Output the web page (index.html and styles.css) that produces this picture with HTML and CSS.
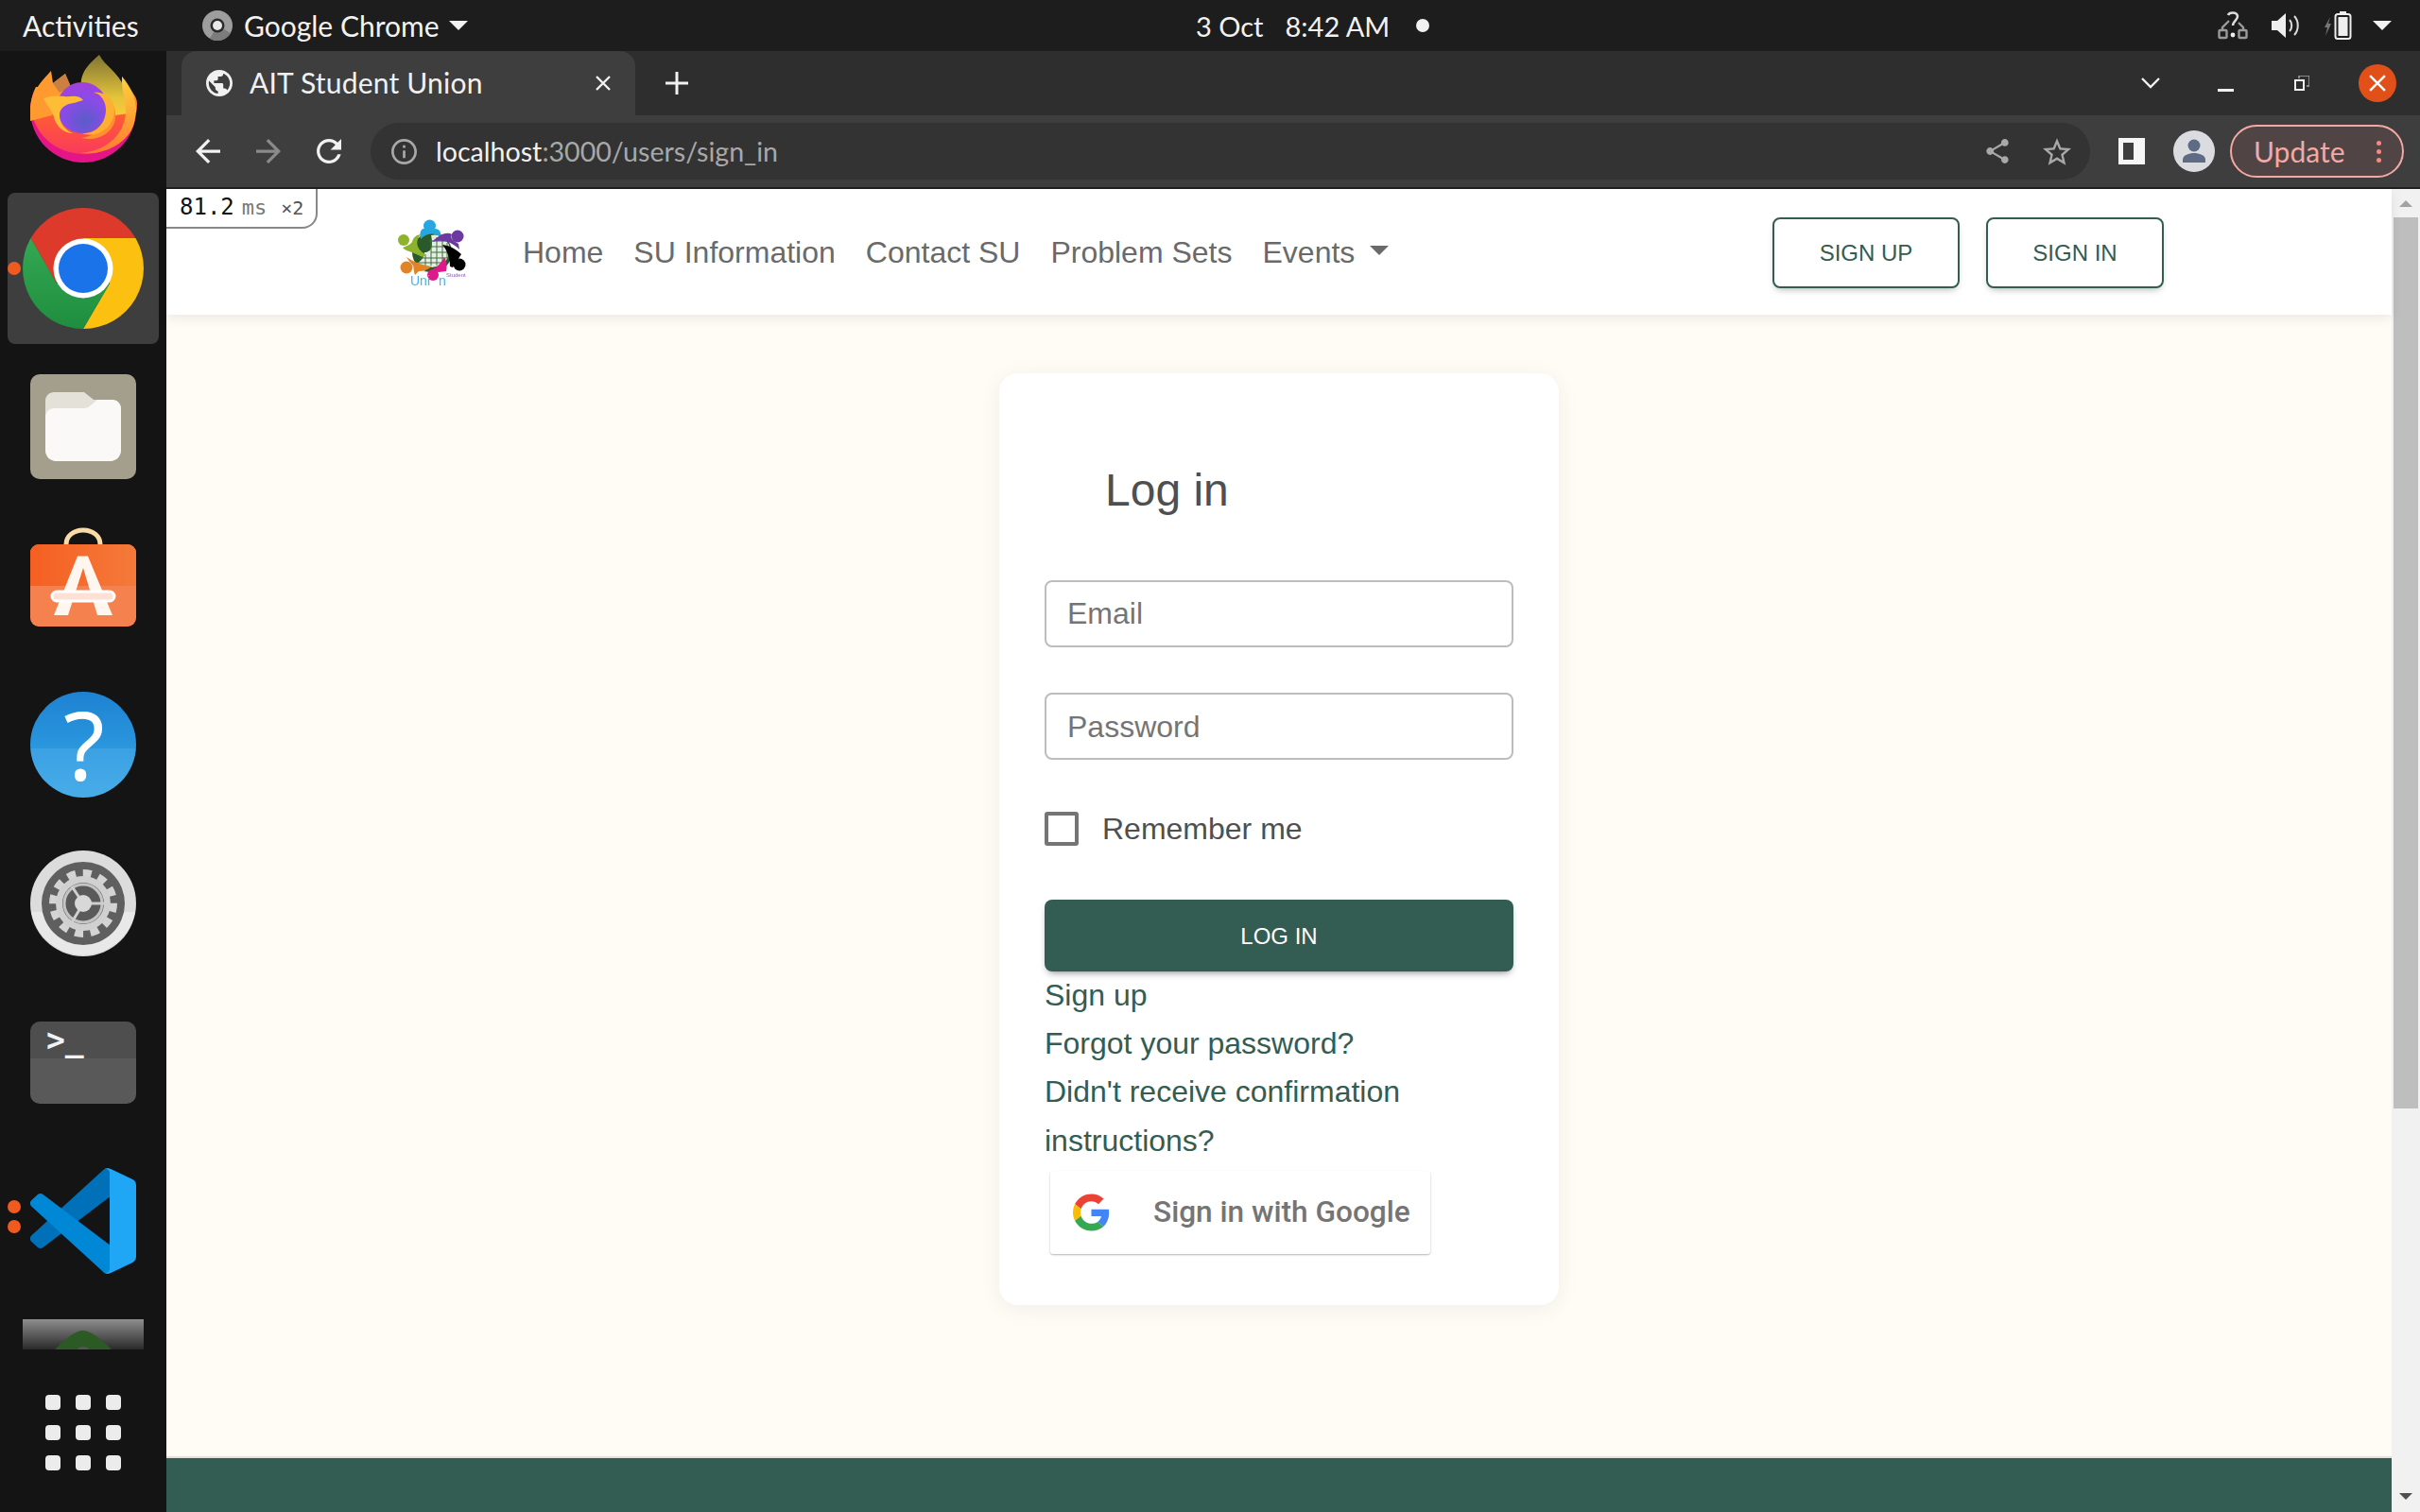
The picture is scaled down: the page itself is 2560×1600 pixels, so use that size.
FILE: index.html
```html
<!DOCTYPE html>
<html lang="en">
<head>
    <meta charset="UTF-8">
    <meta name="viewport" content="width=device-width, initial-scale=1.0">
    <title>AIT Student Union</title>
    <link rel="stylesheet" href="styles.css">
</head>
<body>

<!-- ubuntu top bar -->
<header class="topbar">
    <span class="activities">Activities</span>
    <span class="app-menu">
        <svg class="app-icon" viewBox="0 0 32 32"><circle cx="16" cy="16" r="16" fill="#9d9d9d"/><path d="M16 16L30 24A16 16 0 0 1 8 30z" fill="#7c7c7c"/><circle cx="16" cy="16" r="7.5" fill="#2a2a2a"/><circle cx="16" cy="16" r="5" fill="#e8e8e8"/></svg>
        <span class="app-name">Google Chrome</span>
        <span class="tri app-tri"></span>
    </span>
    <span class="clock"><span class="clock-date">3 Oct</span><span>8:42 AM</span></span>
    <span class="clock-dot"></span>
    <span class="tray">
        <svg class="tray-net" viewBox="0 0 32 32" fill="none" stroke="#9a9a9a" stroke-width="2.4"><rect x="1.5" y="21" width="8" height="8" rx="1"/><rect x="22.5" y="21" width="8" height="8" rx="1"/><path d="M5 21v-3l7-7M27 21v-3l-5-5"/><path d="M11 5c1-3 9-4 10 1 .7 4-5 5-5 10" stroke="#dcdcdc" stroke-width="2.6"/><circle cx="16" cy="26" r="2.4" fill="#eee" stroke="none"/></svg>
        <svg class="tray-vol" viewBox="0 0 30 26"><path d="M0 8h6l9-8v26l-9-8H0z" fill="#eee"/><path d="M19 7c3 3 3 9 0 12M24 3c5 5 5 15 0 20" fill="none" stroke="#ddd" stroke-width="2"/></svg>
        <svg class="tray-bat" viewBox="0 0 29 30"><path d="M6 6L0 17h3l-2 9 6-13H4z" fill="#777"/><rect x="11.5" y="3" width="16" height="26" rx="2.5" fill="none" stroke="#eee" stroke-width="2"/><rect x="16" y="0" width="7" height="3" fill="#eee"/><rect x="14.5" y="6" width="10" height="20" fill="#eee"/></svg>
        <span class="tri tray-tri"></span>
    </span>
</header>

<div class="desktop">
    <!-- launcher -->
    <nav class="dock">
        <div class="dock-first">
            <svg class="dock-fox" viewBox="0 0 130 125">
                <defs>
                    <linearGradient id="foxBody" x1="0" y1="0" x2="0" y2="1"><stop offset="0" stop-color="#ffa52f"/><stop offset=".45" stop-color="#ff5a37"/><stop offset="1" stop-color="#f93a5c"/></linearGradient>
                    <linearGradient id="foxTop" x1="0" y1="0" x2="0" y2="1"><stop offset="0" stop-color="#7f7434"/><stop offset=".7" stop-color="#e4c43a"/><stop offset="1" stop-color="#ffc83a"/></linearGradient>
                    <linearGradient id="foxWrap" x1="0" y1="0" x2="0" y2="1"><stop offset="0" stop-color="#ffd23d"/><stop offset="1" stop-color="#ff7a2f"/></linearGradient>
                    <radialGradient id="foxGlobe" cx=".55" cy=".75" r=".8"><stop offset="0" stop-color="#5a5cc8"/><stop offset=".55" stop-color="#8a4be8"/><stop offset="1" stop-color="#a63fd8"/></radialGradient>
                </defs>
                <path d="M14 38H112C117 46 120 54 120 62A56 56 0 0 1 8 62C8 54 10 46 14 38z" fill="#e31587"/>
                <path d="M14 38H112C118 46 121 50 121 56C121 86 96 109 65 109C34 109 9 86 9 56C9 50 11 44 14 38z" fill="url(#foxBody)"/>
                <path d="M62 38C60 22 72 12 81 4c6 12 20 18 26 34l-2-11c9 10 15 22 15 38l-30 4z" fill="url(#foxTop)"/>
                <path d="M8 62C8 44 20 32 30 21l2 13 13-10 6 14-20 30-23 6z" fill="#ff9a30"/>
                <path d="M32 34l13-10 6 14-12 6z" fill="#c98040"/>
                <path d="M105 27c10 14 16 24 14 44-3 24-30 40-58 37 26-2 46-18 48-42 1-14-5-24-4-39z" fill="url(#foxWrap)"/>
                <path d="M75 44c16-2 25 14 23 28-3 16-20 24-36 20 16-2 26-14 26-28 0-10-6-17-13-20z" fill="#ff8f30"/>
                <circle cx="63" cy="60" r="27" fill="url(#foxGlobe)"/>
                <path d="M75 44c8 1 13 10 13 18 0 14-10 26-25 25 16 6 34-6 34-25 0-10-10-20-22-18z" fill="#ffb030"/>
                <path d="M22 50c8-3 16-3 22-2 6 1 14-3 20 4-6 2-10 3-15 4-6 2-10 6-10 12 0 8 6 16 14 19-10 0-18-8-20-17-1-6-6-10-11-20z" fill="#ffbc36"/>
            </svg>
        </div>
        <div class="dock-slot dock-active">
            <span class="run-dot chrome-dot"></span>
            <svg class="dock-chrome" viewBox="0 0 128 128">
                <defs><linearGradient id="chromeGreen" x1="0" y1="0" x2="0" y2="1"><stop offset="0" stop-color="#34a853"/><stop offset="1" stop-color="#1e8e3e"/></linearGradient></defs>
                <path d="M8.6 32A64 64 0 0 1 119.4 32L64 32 36 80z" fill="#de3a2c"/>
                <path d="M119.4 32A64 64 0 0 1 64 128L92 80 64 32z" fill="#fcc010"/>
                <path d="M64 128A64 64 0 0 1 8.6 32L36 80l56 0z" fill="url(#chromeGreen)"/>
                <circle cx="64" cy="64" r="31.5" fill="#fff"/>
                <circle cx="64" cy="64" r="26" fill="#1a73e8"/>
            </svg>
        </div>
        <div class="dock-slot">
            <svg class="dock-icon" viewBox="0 0 112 112">
                <rect width="112" height="111" rx="10" fill="#a49e8c"/>
                <path d="M16 28c0-5 4-9 9-9h32l10 8h20c5 0 9 4 9 9v44c0 7-5 12-12 12H28c-7 0-12-5-12-12z" fill="#e4e1d9"/>
                <path d="M16 46c0-6 4-10 10-10h30c4 0 6-1 9-4l6-5h15c6 0 10 4 10 10v43c0 7-5 12-12 12H28c-7 0-12-5-12-12z" fill="#faf9f7"/>
            </svg>
        </div>
        <div class="dock-slot">
            <svg class="dock-icon" viewBox="0 0 112 112">
                <defs><linearGradient id="bagTop" x1="0" y1="0" x2="1" y2="0"><stop offset="0" stop-color="#f55f22"/><stop offset="1" stop-color="#f47a3a"/></linearGradient></defs>
                <path d="M38 14v-2c0-9 8-15 18-15s18 6 18 15v2" fill="none" stroke="#fadba6" stroke-width="5" stroke-linecap="round"/>
                <rect y="12" width="112" height="87" rx="9" fill="#f4814e"/>
                <path d="M9 12h94a9 9 0 0 1 9 9v35H0V21a9 9 0 0 1 9-9z" fill="url(#bagTop)"/>
                <path d="M25 87L50 24.5h11L87 87H71L56 37 40 87z" fill="#fff6f0"/>
                <rect x="23" y="62" width="66" height="10" rx="5" fill="#ffe0d4" stroke="#fff" stroke-width="3"/>
            </svg>
        </div>
        <div class="dock-slot">
            <svg class="dock-icon" viewBox="0 0 112 112">
                <defs><linearGradient id="helpBlue" x1="0" y1="0" x2="0" y2="1"><stop offset="0" stop-color="#1e82d2"/><stop offset=".54" stop-color="#2a97de"/><stop offset=".54" stop-color="#3ba1e3"/><stop offset="1" stop-color="#48ace8"/></linearGradient></defs>
                <circle cx="56" cy="56" r="56" fill="url(#helpBlue)"/>
                <text class="help-mark" x="57" y="94">?</text>
            </svg>
        </div>
        <div class="dock-slot">
            <svg class="dock-icon" viewBox="0 0 112 112">
                <circle cx="56" cy="56" r="56" fill="#dcdcdc"/>
                <path d="M1 65h110a56 56 0 0 1-110 0z" fill="#e8e8e8"/>
                <circle cx="56" cy="56" r="44" fill="#5f5f5f"/>
                <circle cx="56" cy="56" r="32" fill="none" stroke="#d4d4d4" stroke-width="8" stroke-dasharray="9 7.7"/>
                <circle cx="56" cy="56" r="29" fill="#d0d0d0"/>
                <circle cx="56" cy="56" r="22" fill="#5a5a5a"/>
                <circle cx="56" cy="56" r="20" fill="none" stroke="#c4c4c4" stroke-width="3"/>
                <path d="M56 56L44 38M56 56H80M56 56L44 76" stroke="#cfcfcf" stroke-width="3"/>
                <circle cx="56" cy="56" r="9" fill="#d8d8d8"/>
            </svg>
        </div>
        <div class="dock-slot">
            <div class="terminal-icon"><span class="terminal-prompt">&gt;_</span></div>
        </div>
        <div class="dock-slot">
            <span class="run-dot code-dot-a"></span>
            <span class="run-dot code-dot-b"></span>
            <svg class="dock-icon" viewBox="0 0 100 100">
                <path d="M96.4614 10.7962L75.8569 0.875542C73.4719 -0.272773 70.6217 0.211611 68.75 2.08333L1.29858 63.5832C-0.515693 65.2373 -0.513607 68.0937 1.30308 69.7452L6.81272 74.754C8.29793 76.1042 10.5347 76.2036 12.1338 74.9905L93.3609 13.3699C96.086 11.3026 100 13.2462 100 16.6667V16.4275C100 14.0265 98.6246 11.8378 96.4614 10.7962Z" fill="#0070b8"/>
                <path d="M96.4614 89.2038L75.8569 99.1245C73.4719 100.273 70.6217 99.7884 68.75 97.9167L1.29858 36.4169C-0.515693 34.7627 -0.513607 31.9063 1.30308 30.2548L6.81272 25.246C8.29793 23.8958 10.5347 23.7964 12.1338 25.0095L93.3609 86.6301C96.086 88.6974 100 86.7538 100 83.3333V83.5725C100 85.9735 98.6246 88.1622 96.4614 89.2038Z" fill="#0087d6"/>
                <path d="M75.8578 99.1263C73.4721 100.274 70.6219 99.7885 68.75 97.9166C71.0564 100.223 75 98.5895 75 95.3278V4.67213C75 1.41039 71.0564 -0.223106 68.75 2.08329C70.6219 0.211402 73.4721 -0.273666 75.8578 0.873633L96.4587 10.7807C98.6234 11.8217 100 14.0112 100 16.4132V83.5871C100 85.9891 98.6234 88.1786 96.4586 89.2196L75.8578 99.1263Z" fill="#1fa6f5"/>
            </svg>
        </div>
        <div class="dock-strip">
            <svg class="strip-arc" viewBox="0 0 128 32"><path d="M34 32C46 20 56 12 64 12s20 10 30 20z" fill="#2c5a24"/><path d="M58 32c2-4 10-4 12 0z" fill="#555"/></svg>
        </div>
        <div class="app-grid">
            <span></span><span></span><span></span>
            <span></span><span></span><span></span>
            <span></span><span></span><span></span>
        </div>
    </nav>

    <div class="browser">
        <div class="tabstrip">
            <div class="tab">
                <svg class="tab-globe" viewBox="2 2 20 20"><path fill="#f1f1f1" d="M12 2C6.48 2 2 6.48 2 12s4.48 10 10 10 10-4.48 10-10S17.52 2 12 2zm-1 17.93c-3.95-.49-7-3.85-7-7.93 0-.62.08-1.21.21-1.79L9 15v1c0 1.1.9 2 2 2v1.93zm6.9-2.54c-.26-.81-1-1.39-1.9-1.39h-1v-3c0-.55-.45-1-1-1H8v-2h2c.55 0 1-.45 1-1V7h2c1.1 0 2-.9 2-2v-.41c2.93 1.19 5 4.06 5 7.41 0 2.08-.8 3.97-2.1 5.39z"/></svg>
                <span class="tab-title">AIT Student Union</span>
                <svg class="tab-close" viewBox="0 0 16 16"><path d="M1 1l14 14M15 1L1 15" stroke="#f1f1f1" stroke-width="2.4"/></svg>
            </div>
            <svg class="new-tab" viewBox="0 0 24 24"><path d="M12 0v24M0 12h24" stroke="#f1f1f1" stroke-width="3"/></svg>
            <svg class="tab-search" viewBox="0 0 20 12"><path d="M1 1l9 9 9-9" fill="none" stroke="#f1f1f1" stroke-width="2.4"/></svg>
            <span class="win-min"></span>
            <svg class="win-restore" viewBox="0 0 16 16"><path d="M5 3V0h11v11h-3" fill="none" stroke="#a8a8a8" stroke-width="1.4"/><rect x="1" y="5" width="9" height="10" fill="none" stroke="#f1f1f1" stroke-width="2"/></svg>
            <span class="win-close"><svg viewBox="0 0 16 16"><path d="M1 1l14 14M15 1L1 15" stroke="#fff" stroke-width="2.2"/></svg></span>
        </div>

        <div class="toolbar">
            <svg class="tool-icon back-icon" viewBox="4 4 16 16"><path fill="#f1f1f1" d="M20 11H7.83l5.59-5.59L12 4l-8 8 8 8 1.41-1.41L7.83 13H20v-2z"/></svg>
            <svg class="tool-icon forward-icon" viewBox="4 4 16 16"><path fill="#8a8a8a" d="M4 11h12.17l-5.59-5.59L12 4l8 8-8 8-1.41-1.41L16.17 13H4v-2z"/></svg>
            <svg class="tool-icon reload-icon" viewBox="4 4 16 16"><path fill="#f1f1f1" d="M17.65 6.35C16.2 4.9 14.21 4 12 4c-4.42 0-7.99 3.58-7.99 8s3.57 8 7.99 8c3.73 0 6.84-2.55 7.73-6h-2.08c-.82 2.33-3.04 4-5.65 4-3.31 0-6-2.69-6-6s2.69-6 6-6c1.66 0 3.14.69 4.22 1.78L13 11h7V4l-2.35 2.35z"/></svg>
            <div class="omnibox">
                <svg class="info-icon" viewBox="2 2 20 20"><path fill="#a8a8a8" d="M11 7h2v2h-2zm0 4h2v6h-2zm1-9C6.48 2 2 6.48 2 12s4.48 10 10 10 10-4.48 10-10S17.52 2 12 2zm0 18c-4.41 0-8-3.59-8-8s3.59-8 8-8 8 3.59 8 8-3.59 8-8 8z"/></svg>
                <span class="url"><span class="url-host">localhost</span>:3000/users/sign_in</span>
                <svg class="share-icon" viewBox="3 2 18 20"><path fill="#a8a8a8" d="M18 16.08c-.76 0-1.44.3-1.96.77L8.91 12.7c.05-.23.09-.46.09-.7s-.04-.47-.09-.7l7.05-4.11c.54.5 1.25.81 2.04.81 1.66 0 3-1.34 3-3s-1.34-3-3-3-3 1.34-3 3c0 .24.04.47.09.7L8.04 9.81C7.5 9.31 6.79 9 6 9c-1.66 0-3 1.34-3 3s1.34 3 3 3c.79 0 1.5-.31 2.04-.81l7.12 4.16c-.05.21-.08.43-.08.65 0 1.61 1.31 2.92 2.92 2.92 1.61 0 2.92-1.31 2.92-2.92s-1.31-2.92-2.92-2.92z"/></svg>
                <svg class="star-icon" viewBox="2 2 20 19"><path fill="#a8a8a8" d="M22 9.24l-7.19-.62L12 2 9.19 8.63 2 9.24l5.46 4.73L5.82 21 12 17.27 18.18 21l-1.63-7.03L22 9.24zM12 15.4l-3.76 2.27 1-4.28-3.32-2.88 4.38-.38L12 6.1l1.71 4.04 4.38.38-3.32 2.88 1 4.28L12 15.4z"/></svg>
            </div>
            <span class="side-panel"><span></span></span>
            <svg class="avatar" viewBox="0 0 44 44"><circle cx="22" cy="22" r="22" fill="#dadce0"/><circle cx="22" cy="16" r="6.5" fill="#5f6b85"/><path d="M10 34v-3c0-5 7-7 12-7s12 2 12 7v3z" fill="#5f6b85"/></svg>
            <div class="update-btn">
                <span>Update</span>
                <span class="update-dots"><i></i><i></i><i></i></span>
            </div>
        </div>

        <div class="viewport">
            <div class="page">
                <div class="timing-badge"><b>81.2</b><span class="ms">ms</span><span class="times">×2</span></div>

                <div class="navbar">
                    <svg class="logo" viewBox="0 0 95 85">
                        <circle cx="47" cy="42" r="21" fill="#2b5a2a"/>
                        <path d="M46 24c8-2 14 2 19 10 2 10-2 18-10 22-8 3-16 2-24-2 6-4 8-8 8-12 6 0 10-4 7-18z" fill="#e4eee4"/>
                        <path d="M34 48h30M32 53h28M44 30h22M46 36h20M46 42h20M40 44v12M46 28v28M52 26v30M58 28v26M63 32v16" stroke="#3f6f3f" stroke-width="1" fill="none"/>
                        <circle cx="44.5" cy="14" r="6.5" fill="#27a7df"/>
                        <path d="M35 28c-2-7 1-12 5-11 3 3 7 3 10 0 5 0 7 4 6 9-6-5-14-5-21 2z" fill="#27a7df"/>
                        <circle cx="74" cy="25" r="6.5" fill="#6d39a0"/>
                        <path d="M47 31c8-8 16-11 21-8-2 4 0 6 7 10l1 6c-8-8-18-11-29-8z" fill="#6d39a0"/>
                        <circle cx="17" cy="29" r="6" fill="#8db32d"/>
                        <path d="M35 23c-6 1-8 4-9 8-2 3-6 4-10 6 2 3 8 4 12 6l9 4 3-3c-10-5-11-14-5-21z" fill="#8db32d"/>
                        <circle cx="20" cy="58" r="6.5" fill="#e08426"/>
                        <path d="M20 47c6 4 14 8 27 10-4 3-8 5-14 5l-4 4c-2-6-1-7-2-10-2-3-5-5-7-9z" fill="#e08426"/>
                        <circle cx="76" cy="55" r="6.5" fill="#000"/>
                        <path d="M58 34c8 1 15 5 20 10l-9 14-3-1c0-9-3-17-8-23z" fill="#000"/>
                        <circle cx="48" cy="66" r="6" fill="#e0198b"/>
                        <path d="M38 63c9-1 17-6 22-16 3 5 3 11 2 15l-8 1c-5-2-10-2-16 0z" fill="#e0198b"/>
                        <text class="logo-student" x="62" y="68">Student</text>
                        <text class="logo-union" x="24" y="77">Uni<tspan dx="9">n</tspan></text>
                    </svg>
                    <a class="nav-link" href="#">Home</a>
                    <a class="nav-link" href="#">SU Information</a>
                    <a class="nav-link" href="#">Contact SU</a>
                    <a class="nav-link" href="#">Problem Sets</a>
                    <a class="nav-link nav-drop" href="#">Events</a>
                    <div class="nav-buttons">
                        <button class="btn-outline btn-signup">SIGN UP</button>
                        <button class="btn-outline btn-signin">SIGN IN</button>
                    </div>
                </div>

                <main class="content">
                    <div class="login-card">
                        <h2 class="login-title">Log in</h2>
                        <form class="login-form">
                            <input class="field" type="email" placeholder="Email">
                            <input class="field" type="password" placeholder="Password">
                            <label class="remember"><input class="check" type="checkbox"><span>Remember me</span></label>
                            <button type="button" class="btn-login">LOG IN</button>
                        </form>
                        <div class="login-links">
                            <a href="#">Sign up</a>
                            <a href="#">Forgot your password?</a>
                            <a href="#">Didn't receive confirmation instructions?</a>
                        </div>
                        <div class="google-btn">
                            <svg class="google-g" viewBox="0 0 48 48">
                                <path fill="#EA4335" d="M24 9.5c3.54 0 6.71 1.22 9.21 3.6l6.85-6.85C35.9 2.38 30.47 0 24 0 14.62 0 6.51 5.38 2.56 13.22l7.98 6.19C12.43 13.72 17.74 9.5 24 9.5z"/>
                                <path fill="#4285F4" d="M46.98 24.55c0-1.57-.15-3.09-.38-4.55H24v9.02h12.94c-.58 2.96-2.26 5.48-4.78 7.18l7.73 6c4.51-4.18 7.09-10.36 7.09-17.65z"/>
                                <path fill="#FBBC05" d="M10.53 28.59c-.48-1.45-.76-2.99-.76-4.59s.27-3.14.76-4.59l-7.98-6.19C.92 16.46 0 20.12 0 24c0 3.88.92 7.54 2.56 10.78l7.97-6.19z"/>
                                <path fill="#34A853" d="M24 48c6.48 0 11.93-2.13 15.89-5.81l-7.73-6c-2.15 1.45-4.92 2.3-8.16 2.3-6.26 0-11.57-4.22-13.47-9.91l-7.98 6.19C6.51 42.62 14.62 48 24 48z"/>
                            </svg>
                            <span>Sign in with Google</span>
                        </div>
                    </div>
                </main>

                <footer class="footer"></footer>
            </div>

            <div class="scrollbar">
                <div class="scroll-btn"><span class="arrow-up"></span></div>
                <div class="scroll-track"><div class="scroll-thumb"></div></div>
                <div class="scroll-btn scroll-btn-down"><span class="arrow-down"></span></div>
            </div>
        </div>
    </div>
</div>

</body>
</html>
```

FILE: styles.css
```css
* {
    box-sizing: border-box;
}
html, body {
    margin: 0;
    padding: 0;
}
body {
    width: 2560px;
    height: 1600px;
    overflow: hidden;
    background: #141414;
    font-family: "Liberation Sans", Arial, sans-serif;
}
svg {
    display: block;
    flex: none;
}

/* ubuntu top bar */
.topbar {
    height: 54px;
    background: #1d1d1d;
    color: #f2f2f2;
    display: flex;
    align-items: center;
    font-family: Lato, "Noto Sans", sans-serif;
    font-size: 30px;
}
.activities {
    margin-left: 24px;
    width: 190px;
}
.app-menu {
    display: flex;
    align-items: center;
}
.app-icon {
    width: 32px;
    height: 32px;
}
.app-name {
    margin-left: 12px;
    width: 217px;
}
.tri {
    width: 0;
    height: 0;
    border-left: 10px solid transparent;
    border-right: 10px solid transparent;
    border-top: 10px solid #f2f2f2;
}
.clock {
    margin-left: 770px;
    display: flex;
    gap: 23px;
    width: 233px;
    font-size: 29px;
}
.clock-dot {
    width: 14px;
    height: 14px;
    border-radius: 50%;
    background: #f2f2f2;
}
.tray {
    margin-left: auto;
    display: flex;
    align-items: center;
    padding-right: 30px;
}
.tray-net {
    width: 32px;
    height: 32px;
}
.tray-vol {
    width: 30px;
    height: 26px;
    margin-left: 25px;
}
.tray-bat {
    width: 29px;
    height: 30px;
    margin-left: 26px;
}
.tray-tri {
    margin-left: 22px;
}

.desktop {
    display: flex;
    height: 1546px;
}

/* launcher */
.dock {
    width: 176px;
    flex: none;
    background: #141414;
    display: flex;
    flex-direction: column;
    align-items: center;
}
.dock-first {
    height: 125px;
    margin: 0 0 25px 2px;
}
.dock-fox {
    width: 130px;
    height: 125px;
}
.dock-slot {
    position: relative;
    width: 160px;
    height: 160px;
    margin-bottom: 8px;
    display: flex;
    align-items: center;
    justify-content: center;
    border-radius: 8px;
}
.dock-active {
    background: #3e3e3e;
}
.dock-chrome {
    width: 128px;
    height: 128px;
    overflow: visible;
}
.dock-icon {
    width: 112px;
    height: 112px;
    overflow: visible;
}
.help-mark {
    font-family: "Noto Sans", sans-serif;
    font-size: 100px;
    fill: #fff;
    text-anchor: middle;
}
.run-dot {
    position: absolute;
    left: 0;
    width: 14px;
    height: 14px;
    border-radius: 50%;
    background: #ef5a1f;
}
.chrome-dot {
    top: 73px;
}
.code-dot-a {
    top: 58px;
}
.code-dot-b {
    top: 79px;
}
.terminal-icon {
    width: 112px;
    height: 87px;
    border-radius: 10px;
    background: linear-gradient(#4e4e4e 45%, #595959 45%);
    padding: 2px 0 0 17px;
}
.terminal-prompt {
    font-family: "DejaVu Sans Mono", monospace;
    font-weight: bold;
    font-size: 33px;
    line-height: 36px;
    color: #f2f2f2;
}
.dock-strip {
    width: 128px;
    height: 32px;
    margin-top: 16px;
    background: linear-gradient(#8e8e8e, #2a2a2a);
}
.strip-arc {
    width: 128px;
    height: 32px;
}
.app-grid {
    margin-top: 48px;
    display: grid;
    grid-template-columns: repeat(3, 16px);
    grid-auto-rows: 16px;
    gap: 16px;
}
.app-grid span {
    background: #ececec;
    border-radius: 4px;
}

/* browser window */
.browser {
    flex: 1;
    min-width: 0;
    display: flex;
    flex-direction: column;
}
.tabstrip {
    height: 68px;
    background: #2e2e2e;
    display: flex;
    align-items: center;
    padding-left: 16px;
    font-family: Lato, "Noto Sans", sans-serif;
}
.tab {
    width: 480px;
    height: 68px;
    background: #3e3e3e;
    border-radius: 16px 16px 0 0;
    display: flex;
    align-items: center;
    padding-left: 26px;
    color: #f1f1f1;
    font-size: 30px;
}
.tab-globe {
    width: 28px;
    height: 28px;
}
.tab-title {
    margin-left: 18px;
    width: 366px;
    padding-bottom: 2px;
    letter-spacing: 0.2px;
}
.tab-close {
    width: 16px;
    height: 16px;
}
.new-tab {
    width: 24px;
    height: 24px;
    margin-left: 32px;
}
.tab-search {
    width: 20px;
    height: 12px;
    margin-left: 1537px;
}
.win-min {
    width: 17px;
    height: 3px;
    margin-left: 61px;
    margin-top: 14px;
    background: #f1f1f1;
}
.win-restore {
    width: 16px;
    height: 16px;
    margin-left: 64px;
}
.win-close {
    width: 40px;
    height: 40px;
    margin-left: 52px;
    border-radius: 50%;
    background: #e2501a;
    display: flex;
    align-items: center;
    justify-content: center;
}
.win-close svg {
    width: 18px;
    height: 18px;
}

.toolbar {
    height: 78px;
    background: #3e3e3e;
    border-bottom: 2px solid #1f1f1f;
    display: flex;
    align-items: center;
    padding-left: 31px;
    font-family: Lato, "Noto Sans", sans-serif;
}
.tool-icon {
    width: 26px;
    height: 26px;
}
.forward-icon {
    margin-left: 38px;
}
.reload-icon {
    margin-left: 38px;
}
.omnibox {
    width: 1819px;
    height: 60px;
    margin-left: 31px;
    border-radius: 30px;
    background: #333333;
    display: flex;
    align-items: center;
    padding-left: 22px;
}
.info-icon {
    width: 27px;
    height: 27px;
}
.url {
    margin-left: 20px;
    width: 1640px;
    font-size: 28.6px;
    color: #a8a8a8;
}
.url-host {
    color: #f1f1f1;
}
.share-icon {
    width: 24px;
    height: 26px;
}
.star-icon {
    width: 30px;
    height: 29px;
    margin-left: 36px;
}
.side-panel {
    width: 28px;
    height: 28px;
    margin-left: 30px;
    background: #f6f6f6;
    padding: 5px 12px 5px 5px;
}
.side-panel span {
    display: block;
    height: 100%;
    background: #3e3e3e;
}
.avatar {
    width: 44px;
    height: 44px;
    margin-left: 30px;
}
.update-btn {
    width: 184px;
    height: 56px;
    margin-left: 16px;
    border: 2px solid #f4a9a4;
    border-radius: 28px;
    background: #514444;
    color: #f4a9a4;
    font-size: 30px;
    display: flex;
    align-items: center;
    padding-left: 23px;
}
.update-dots {
    margin-left: auto;
    margin-right: 22px;
    display: flex;
    flex-direction: column;
    gap: 4px;
}
.update-dots i {
    display: block;
    width: 5px;
    height: 5px;
    border-radius: 50%;
    background: #f28b82;
}

/* the page */
.viewport {
    flex: 1;
    display: flex;
    min-height: 0;
}
.page {
    position: relative;
    flex: 1;
    min-width: 0;
    background: #fffcf5;
    display: flex;
    flex-direction: column;
}
.timing-badge {
    position: absolute;
    left: 0;
    top: 0;
    width: 160px;
    height: 42px;
    background: #fff;
    border-right: 2px solid #888;
    border-bottom: 2px solid #888;
    border-bottom-right-radius: 16px;
    padding-left: 14px;
    font-family: "DejaVu Sans Mono", monospace;
    font-size: 22px;
    line-height: 38px;
    white-space: nowrap;
    color: #777;
}
.timing-badge b {
    font-weight: normal;
    font-size: 24px;
    color: #111;
}
.timing-badge .ms {
    margin-left: 8px;
}
.timing-badge .times {
    margin-left: 15px;
    font-size: 20px;
    color: #555;
}
.navbar {
    height: 133px;
    flex: none;
    background: #fff;
    box-shadow: 0 4px 12px rgba(0,0,0,0.08);
    display: flex;
    align-items: center;
    padding: 2px 241px 0 234px;
}
.logo {
    width: 95px;
    height: 85px;
    margin-right: 48px;
    filter: blur(0.5px);
}
.logo-student {
    font-size: 6px;
    fill: #8a5fb0;
}
.logo-union {
    font-size: 14px;
    fill: #48b5e8;
}
.nav-link {
    color: #6a6a6a;
    font-size: 32px;
    text-decoration: none;
    margin-right: 32px;
}
.nav-drop {
    display: flex;
    align-items: center;
    margin-right: 0;
}
.nav-drop::after {
    content: "";
    margin-left: 16px;
    margin-top: -6px;
    border-left: 10px solid transparent;
    border-right: 10px solid transparent;
    border-top: 10px solid #6a6a6a;
}
.nav-buttons {
    margin-left: auto;
    display: flex;
    gap: 28px;
}
.btn-outline {
    height: 75px;
    background: #fff;
    border: 2px solid #335c53;
    border-radius: 8px;
    color: #335c53;
    font-family: inherit;
    font-size: 24px;
    box-shadow: 0 4px 9px -4px rgba(0,0,0,0.4);
    padding: 0;
}
.btn-signup {
    width: 198px;
}
.btn-signin {
    width: 188px;
}
.content {
    flex: 1;
    padding-top: 62px;
}
.login-card {
    width: 592px;
    margin: 0 auto;
    background: #fff;
    border-radius: 20px;
    box-shadow: 0 4px 24px rgba(0,0,0,0.06);
    padding: 95px 48px 54px;
}
.login-title {
    margin: 0 0 67px 64px;
    font-size: 48px;
    font-weight: normal;
    line-height: 57px;
    color: #4f4f4f;
}
.login-form {
    display: flex;
    flex-direction: column;
}
.field {
    width: 496px;
    height: 71px;
    margin-bottom: 48px;
    border: 2px solid #bdbdbd;
    border-radius: 8px;
    padding: 0 22px;
    font-family: inherit;
    font-size: 32px;
    background: #fff;
}
.field + .field {
    padding-top: 2px;
}
.field::placeholder {
    color: #757575;
    opacity: 1;
}
.remember {
    display: flex;
    align-items: center;
    height: 36px;
    margin-top: 7px;
    font-size: 32px;
    color: #4f4f4f;
}
.check {
    appearance: none;
    width: 36px;
    height: 36px;
    margin: 0 25px 0 0;
    border: 4px solid #757575;
    border-radius: 3px;
    background: #fff;
}
.btn-login {
    width: 496px;
    height: 76px;
    margin-top: 57px;
    background: #335c53;
    border: none;
    border-radius: 8px;
    color: #fff;
    font-family: inherit;
    font-size: 24px;
    box-shadow: 0 4px 9px -4px rgba(0,0,0,0.6);
    padding: 2px 0 0;
}
.login-links {
    font-size: 32px;
    line-height: 51.2px;
}
.login-links a {
    display: block;
    color: #335c53;
    text-decoration: none;
}
.google-btn {
    width: 402px;
    height: 88px;
    margin: 6px 0 0 6px;
    background: #fff;
    border-radius: 3px;
    box-shadow: 0 1px 2px rgba(0,0,0,0.3);
    display: flex;
    align-items: center;
    padding-left: 24px;
    color: #757575;
    font-family: Roboto, sans-serif;
    font-weight: 500;
    font-size: 31.6px;
    white-space: nowrap;
}
.google-g {
    width: 39px;
    height: 40px;
    margin-right: 46px;
}
.footer {
    height: 59px;
    flex: none;
    background: #335c53;
    border-top: 2px solid #e2e2dc;
}

/* scrollbar */
.scrollbar {
    width: 30px;
    flex: none;
    background: #f1f1f1;
    display: flex;
    flex-direction: column;
}
.scroll-btn {
    height: 30px;
    display: flex;
    align-items: center;
    justify-content: center;
}
.scroll-btn-down {
    height: 34px;
}
.scroll-track {
    flex: 1;
    padding: 0 2px;
}
.scroll-thumb {
    height: 943px;
    background: #bebebe;
}
.arrow-up {
    border-left: 7px solid transparent;
    border-right: 7px solid transparent;
    border-bottom: 7px solid #a3a3a3;
}
.arrow-down {
    border-left: 7px solid transparent;
    border-right: 7px solid transparent;
    border-top: 7px solid #505050;
}
```
